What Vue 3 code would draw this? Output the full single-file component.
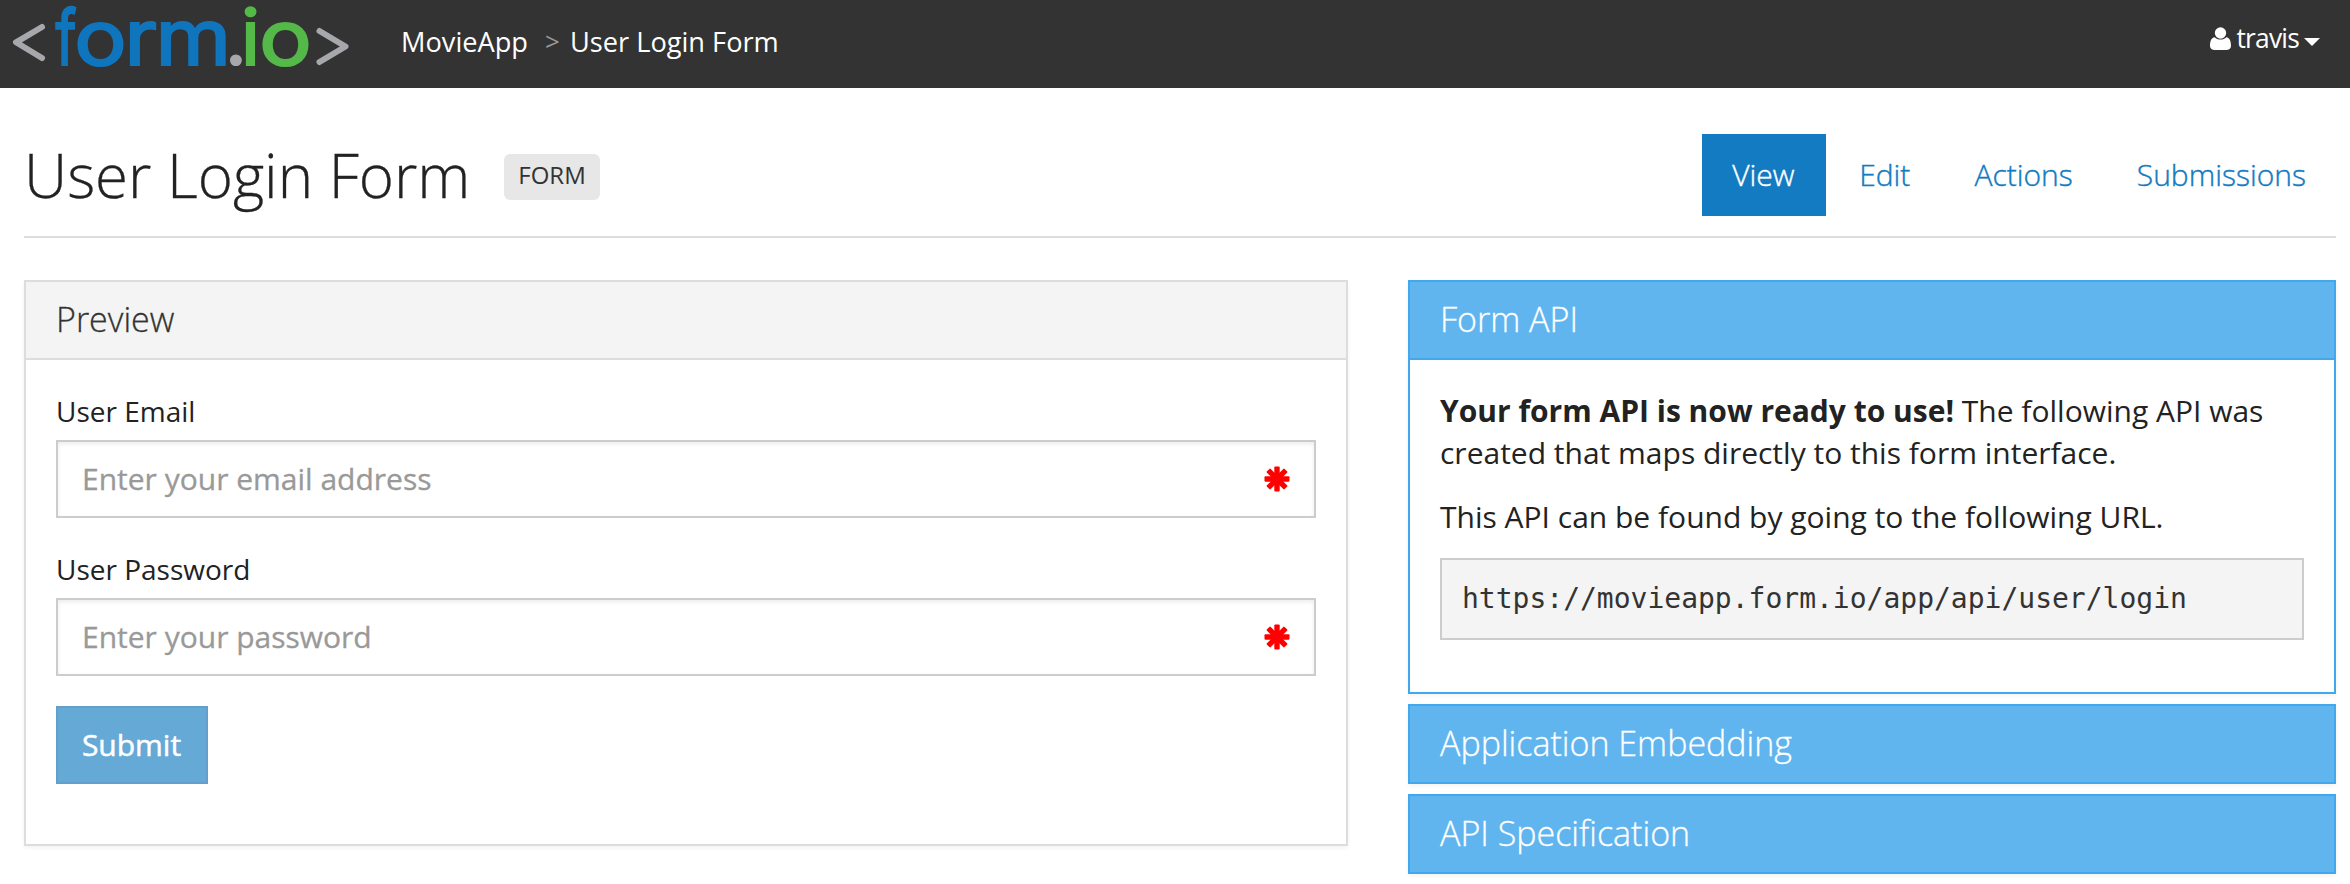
<script setup>
const tabs = [
  { label: 'View', active: true },
  { label: 'Edit' },
  { label: 'Actions' },
  { label: 'Submissions' },
]
const fields = [
  { id: 'email', label: 'User Email', type: 'text', hint: 'Enter your email address' },
  { id: 'password', label: 'User Password', type: 'password', hint: 'Enter your password' },
]
const angles = [0, 45, 90, 135]
// Wordmark letters: start position and advance on the logo's baseline
const letters = [
  { ch: 'f', x: 55.5, w: 21, tone: 'blue' },
  { ch: 'o', x: 74.2, w: 52.4, tone: 'blue' },
  { ch: 'r', x: 124.6, w: 32.4, tone: 'blue' },
  { ch: 'm', x: 155.4, w: 75.6, tone: 'blue' },
  { ch: 'i', x: 241, w: 19, tone: 'green' },
  { ch: 'o', x: 259.2, w: 52.4, tone: 'green' },
]
</script>

<template>
  <div class="page">
    <header class="navbar">
      <svg class="logo" width="356" height="88" viewBox="0 0 356 88" role="img">
        <g fill="none" stroke="#a7a8ac" stroke-width="6" stroke-linecap="round" stroke-linejoin="round">
          <polyline points="42,27 16,42.3 42,58" />
          <polyline points="319.500,31 345.500,46.500 319.500,62" />
        </g>
        <text
          v-for="l in letters"
          :key="l.x"
          :class="['word', l.tone]"
          :x="l.x"
          y="65"
          :textLength="l.w"
          lengthAdjust="spacingAndGlyphs"
        >{{ l.ch }}</text>
        <text class="word grey" y="65" x="226">.</text>
      </svg>
      <nav class="crumbs">
        <a>MovieApp</a>
        <span class="sep">&gt;</span>
        <a>User Login Form</a>
      </nav>
      <div class="user">
        <svg class="person" width="21" height="24" viewBox="0 0 21 24" fill="#fff">
          <circle cx="10.500" cy="6" r="5.700" />
          <path d="M4.600 10.200C1.200 10.600 0 14.500 0 18.800C0 21.300 1.600 22.900 4 22.900H17C19.400 22.900 21 21.300 21 18.800C21 14.500 19.800 10.600 16.400 10.200C14.800 11.700 12.800 12.500 10.500 12.500S6.200 11.700 4.600 10.200Z" />
        </svg>
        <span class="name">travis</span>
        <svg class="caret" width="16" height="8" viewBox="0 0 16 8"><path d="M0 0H16L8 8Z" fill="#fff" /></svg>
      </div>
    </header>

    <main class="content">
      <div class="title-row">
        <h1>User Login Form</h1>
        <span class="badge">FORM</span>
        <ul class="tabs">
          <li v-for="t in tabs" :key="t.label" :class="{ active: t.active }">{{ t.label }}</li>
        </ul>
      </div>

      <div class="columns">
        <section class="panel preview">
          <h2>Preview</h2>
          <form class="form" @submit.prevent>
            <div v-for="f in fields" :key="f.id" class="field">
              <label :for="f.id">{{ f.label }}</label>
              <div class="control">
                <input :id="f.id" :type="f.type" :placeholder="f.hint" />
                <svg class="required" width="26" height="26" viewBox="-13 -13 26 26" fill="#f00">
                  <rect v-for="a in angles" :key="a" x="-12.500" y="-2.700" width="25" height="5.400" rx="1" :transform="`rotate(${a})`" />
                  <circle r="6.500" />
                </svg>
              </div>
            </div>
            <button type="submit">Submit</button>
          </form>
        </section>

        <aside class="side">
          <section class="panel info">
            <h2>Form API</h2>
            <div class="info-body">
              <p><strong>Your form API is now ready to use!</strong> The following API was<br />created that maps directly to this form interface.</p>
              <p>This API can be found by going to the following URL.</p>
              <pre>https://movieapp.form.io/app/api/user/login</pre>
            </div>
          </section>
          <section class="panel info closed"><h2>Application Embedding</h2></section>
          <section class="panel info closed"><h2>API Specification</h2></section>
        </aside>
      </div>
    </main>
  </div>
</template>

<style>
body {
  margin: 0;
  background: #fff;
}
</style>

<style scoped>
* {
  box-sizing: border-box;
}
.page {
  width: 2350px;
  height: 884px;
  overflow: hidden;
  background: #fff;
  color: #222;
  font-family: 'Open Sans', 'Noto Sans', sans-serif;
  font-size: 30px;
  white-space: nowrap;
}
.navbar {
  height: 88px;
  background: #333;
  display: flex;
  color: #fff;
  font-size: 27.2px;
  line-height: 83px;
}
.logo {
  display: block;
  flex: none;
}
.word {
  font-family: Inter, sans-serif;
  font-size: 76.5px;
  stroke-width: 2.2px;
}
.blue {
  fill: #0f75bd;
  stroke: #0f75bd;
}
.green {
  fill: #54b948;
  stroke: #54b948;
}
.grey {
  font-family: Lato, sans-serif;
  font-size: 84px;
  stroke-width: 1.2px;
  fill: #a7a8ac;
  stroke: #a7a8ac;
}
.crumbs {
  display: flex;
  margin-left: 45px;
}
.sep {
  width: 42px;
  padding-left: 17px;
  color: #999;
  font-size: 26px;
}
.user {
  display: flex;
  margin-left: auto;
  padding-right: 30px;
  line-height: 77px;
}
.name {
  font-size: 26.4px;
  letter-spacing: -0.8px;
}
.person {
  margin: 27px 6px 0 0;
}
.caret {
  margin: 38px 0 0 5px;
}
.content {
  padding: 0 14px 0 24px;
}
.title-row {
  height: 150px;
  border-bottom: 2px solid #ddd;
  display: flex;
}
h1 {
  margin: 0;
  font-size: 60px;
  font-weight: 300;
  line-height: 174px;
  width: 480px;
  -webkit-text-stroke: 0.3px currentColor;
}
.badge {
  margin-top: 66px;
  width: 96px;
  height: 46px;
  border-radius: 6px;
  background: #e7e7e7;
  color: #333;
  font-size: 24px;
  line-height: 42px;
  text-align: center;
}
.tabs {
  margin: 46px 0 0 auto;
  padding: 0;
  list-style: none;
  display: flex;
  gap: 4px;
  font-weight: 300;
  color: #127bc1;
  -webkit-text-stroke: 0.4px currentColor;
}
.tabs li {
  height: 82px;
  line-height: 82px;
  padding: 0 30px;
}
.tabs .active {
  width: 124px;
  margin-right: -1px;
  background: #127bc1;
  color: #fff;
}
.columns {
  display: flex;
  gap: 60px;
  padding-top: 42px;
  align-items: flex-start;
}
.panel {
  border: 2px solid #ddd;
  background: #fff;
  box-shadow: 0 2px 4px rgba(0, 0, 0, 0.05);
}
.preview {
  width: 1324px;
  height: 566px;
}
h2 {
  margin: 0;
  height: 78px;
  padding-left: 30px;
  font-size: 34px;
  font-weight: 300;
  line-height: 74px;
  color: #333;
  background: #f4f4f4;
  border-bottom: 2px solid #ddd;
  -webkit-text-stroke: 0.3px currentColor;
}
.form {
  padding: 32px 30px 0;
}
.field {
  margin-bottom: 32px;
}
label {
  display: block;
  height: 48px;
  font-size: 28px;
  line-height: 38px;
}
.control {
  position: relative;
  height: 78px;
}
input {
  display: block;
  width: 100%;
  height: 78px;
  border: 2px solid #ccc;
  border-radius: 0;
  padding: 0 24px 2px;
  background: #fff;
  font-family: inherit;
  font-size: 30px;
  box-shadow: inset 0 2px 4px rgba(0, 0, 0, 0.08);
}
input::placeholder {
  color: #999;
  opacity: 1;
  -webkit-text-stroke: 0.3px currentColor;
}
.required {
  position: absolute;
  right: 26px;
  top: 26px;
}
button {
  display: block;
  margin-top: -2px;
  width: 152px;
  height: 78px;
  padding: 0 1px 0 0;
  border: 2px solid #629fca;
  background: #65a9d6;
  color: #fff;
  font-family: inherit;
  font-size: 30px;
  line-height: 72px;
  -webkit-text-stroke: 0.5px currentColor;
}
.side {
  width: 928px;
  display: flex;
  flex-direction: column;
  gap: 10px;
}
.info {
  height: 414px;
  border-color: #41a7ee;
}
.info h2 {
  color: #fff;
  background: #61b5ef;
  border-color: #41a7ee;
}
.closed {
  height: 80px;
}
.closed h2 {
  height: 76px;
  border: 0;
}
.info-body {
  padding: 30px 30px 0;
  line-height: 42px;
}
p {
  margin: 0 0 22px;
}
strong {
  font-weight: 700;
}
pre {
  margin: -2px 0 0;
  height: 82px;
  border: 2px solid #ccc;
  background: #f4f4f4;
  color: #333;
  padding-left: 20px;
  font-family: 'DejaVu Sans Mono', monospace;
  font-size: 28px;
  line-height: 77px;
}
</style>
